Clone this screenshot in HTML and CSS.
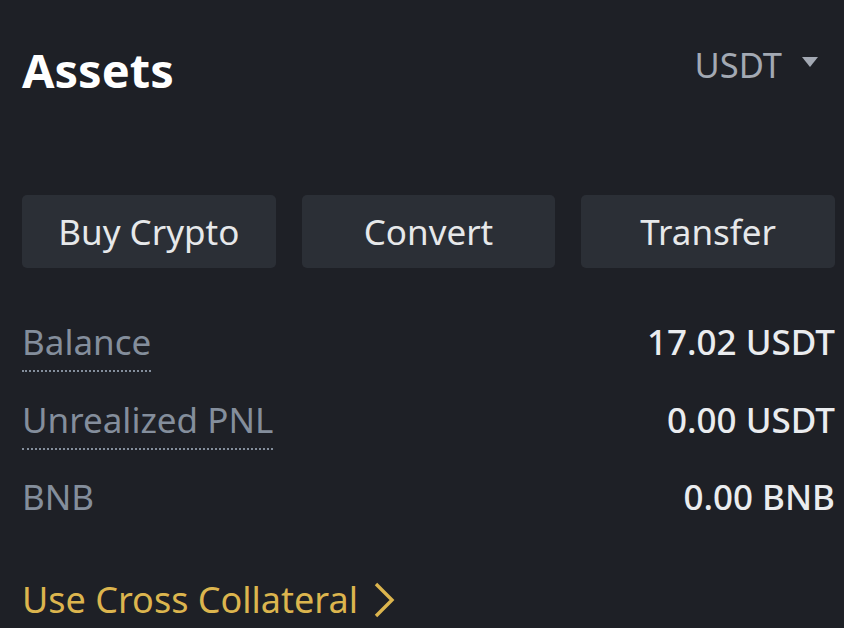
FILE: index.html
```html
<!DOCTYPE html>
<html>
<head>
<meta charset="utf-8">
<link rel="stylesheet" href="styles.css">
</head>
<body>
<div class="panel">
  <div class="header">
    <h1 class="title">Assets</h1>
    <div class="currency">USDT <span class="caret"></span></div>
  </div>
  <div class="actions">
    <div class="btn">Buy Crypto</div>
    <div class="btn">Convert</div>
    <div class="btn">Transfer</div>
  </div>
  <div class="rows">
    <div class="row"><span class="label dotted">Balance</span><span class="value">17.02 USDT</span></div>
    <div class="row"><span class="label dotted">Unrealized PNL</span><span class="value">0.00 USDT</span></div>
    <div class="row"><span class="label">BNB</span><span class="value">0.00 BNB</span></div>
  </div>
  <div class="link">Use Cross Collateral
    <svg class="chev" width="24" height="38" viewBox="0 0 24 38"><path d="M4 3 L20 19 L4 35" fill="none" stroke="currentColor" stroke-width="3.4"/></svg>
  </div>
</div>
</body>
</html>
```
FILE: styles.css
```css
html, body {
  margin: 0;
  padding: 0;
  background: #1e2026;
  height: 100%;
  overflow: hidden;
}
.panel {
  padding: 0 9px 0 22px;
  font-family: "Noto Sans", Roboto, sans-serif;
  color: #eaecef;
}
.header {
  display: flex;
  justify-content: space-between;
  align-items: flex-start;
  padding-top: 40px;
  height: 150px;
  box-sizing: border-box;
}
.title {
  margin: 0;
  font-size: 47px;
  font-weight: 700;
  line-height: 60px;
  color: #ffffff;
}
.currency {
  display: flex;
  align-items: center;
  font-size: 34.5px;
  line-height: 50px;
  color: #a3a9b3;
  margin-top: 0;
}
.caret {
  width: 0;
  height: 0;
  border-left: 8px solid transparent;
  border-right: 8px solid transparent;
  border-top: 10px solid #a3a9b3;
  margin-left: 20px;
  margin-right: 17px;
  margin-top: -6px;
}
.actions {
  display: grid;
  grid-template-columns: repeat(3, 1fr);
  column-gap: 26px;
  margin-top: 45px;
}
.btn {
  height: 73px;
  background: #2b2f36;
  border-radius: 5px;
  display: flex;
  align-items: center;
  justify-content: center;
  font-size: 35px;
  color: #e6e8ea;
}
.rows {
  margin-top: 50px;
}
.row {
  display: flex;
  justify-content: space-between;
  align-items: flex-start;
  height: 77.5px;
  font-size: 35px;
  line-height: 48px;
}
.label {
  color: #848e9c;
}
.dotted {
  border-bottom: 2px dotted #848e9c;
  padding-bottom: 4px;
}
.value {
  color: #eaecef;
  font-weight: 500;
}
.link {
  margin-top: 25px;
  display: flex;
  align-items: center;
  font-size: 36px;
  line-height: 48px;
  color: #dcb54e;
}
.chev {
  margin-left: 14px;
}
```
